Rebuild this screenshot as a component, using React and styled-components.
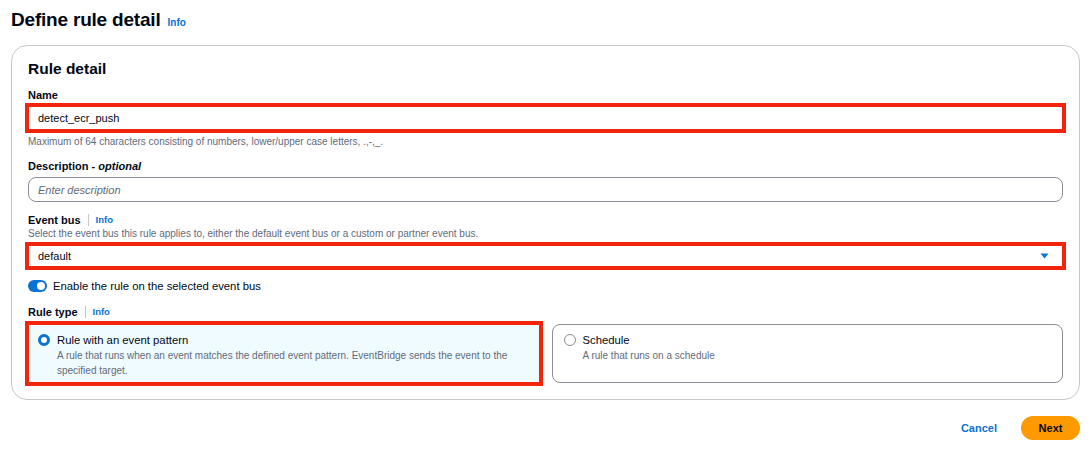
import React from 'react';
import styled, { createGlobalStyle } from 'styled-components';

const Global = createGlobalStyle`
  html, body { margin: 0; padding: 0; background: #ffffff; }
  body { font-family: "Liberation Sans", Arial, sans-serif; color: #000716; }
  * { box-sizing: border-box; }
`;

const Page = styled.div`
  padding: 8px 11px 0 11px;
`;

const TitleRow = styled.div`
  display: flex;
  align-items: baseline;
  gap: 7px;
  height: 24px;
  margin-bottom: 13px;
`;

const H1 = styled.h1`
  margin: 0;
  font-size: 19px;
  line-height: 24px;
  font-weight: 700;
  letter-spacing: -0.2px;
`;

const InfoLink = styled.a`
  color: #0972d3;
  font-weight: 700;
  font-size: ${p => p.$size || 9.5}px;
  text-decoration: none;
  cursor: pointer;
`;

const Panel = styled.section`
  border: 1px solid #c6c6cd;
  border-radius: 16px;
  padding: 13px 16px 16px;
`;

const H2 = styled.h2`
  margin: 0;
  font-size: 15.5px;
  line-height: 20px;
  font-weight: 700;
`;

const Label = styled.div`
  display: flex;
  align-items: center;
  font-size: 11px;
  line-height: 14px;
  font-weight: 700;
  margin-top: ${p => p.$mt || 0}px;
  margin-bottom: ${p => p.$mb || 0}px;
  em { font-style: italic; }
`;

const Sep = styled.span`
  display: inline-block;
  width: 1px;
  height: 12px;
  background: #c6c6cd;
  margin: 0 7px;
`;

const Help = styled.div`
  font-size: 10px;
  line-height: 13px;
  color: #5f6b7a;
  margin-top: ${p => p.$mt || 0}px;
`;

const Field = styled.div`
  display: flex;
  align-items: center;
  justify-content: space-between;
  height: ${p => p.$h}px;
  margin: ${p => (p.$highlight ? `${p.$mt || 0}px -3px 0` : `${p.$mt || 0}px 0 0`)};
  padding: 0 13px 0 9px;
  border: ${p => (p.$highlight ? '4px solid #f2250c' : '1px solid #8c8c94')};
  border-radius: ${p => (p.$highlight ? 0 : 8)}px;
  background: #ffffff;
  font-size: 11px;
  color: #000716;
`;

const Placeholder = styled.span`
  font-style: italic;
  color: #5f6b7a;
`;

const ToggleRow = styled.div`
  display: flex;
  align-items: center;
  gap: 6px;
  margin-top: 9px;
  height: 14px;
  font-size: 11.3px;
`;

const Toggle = styled.span`
  position: relative;
  display: inline-block;
  width: 19px;
  height: 12px;
  border-radius: 6px;
  background: #0972d3;
  &::after {
    content: '';
    position: absolute;
    top: 2px;
    right: 2px;
    width: 8px;
    height: 8px;
    border-radius: 50%;
    background: #ffffff;
  }
`;

const Cards = styled.div`
  display: grid;
  grid-template-columns: 1fr 1fr;
  grid-template-rows: 59px;
  gap: 12px;
  margin-top: 5px;
`;

const Card = styled.div`
  display: flex;
  align-items: flex-start;
  gap: 7px;
  margin: ${p => (p.$highlight ? '-3px' : '0')};
  padding: 8px 10px 0 ${p => (p.$highlight ? 9 : 11)}px;
  border: ${p => (p.$highlight ? '4px solid #f2250c' : '1px solid #8c8c94')};
  border-radius: ${p => (p.$highlight ? 0 : 8)}px;
  background: ${p => (p.$selected ? '#f0fbff' : '#ffffff')};
`;

const Radio = styled.span`
  flex: none;
  width: 12px;
  height: 12px;
  margin-top: 1px;
  border-radius: 50%;
  border: ${p => (p.$checked ? '3.5px solid #0972d3' : '1px solid #8c8c94')};
  background: #ffffff;
`;

const CardText = styled.div`
  display: flex;
  flex-direction: column;
`;

const CardTitle = styled.div`
  font-size: 11.3px;
  line-height: 14px;
  color: #000716;
`;

const CardDesc = styled.div`
  font-size: 10px;
  line-height: 15px;
  color: #5f6b7a;
  margin-top: 1px;
`;

const Footer = styled.div`
  display: flex;
  justify-content: flex-end;
  align-items: center;
  gap: 24px;
  margin-top: 16px;
`;

const LinkButton = styled.button`
  border: none;
  background: none;
  padding: 0;
  font-family: inherit;
  font-size: 11px;
  font-weight: 700;
  color: #0972d3;
  cursor: pointer;
`;

const PrimaryButton = styled.button`
  width: 59px;
  height: 24px;
  border: none;
  border-radius: 12px;
  background: #ff9900;
  font-family: inherit;
  font-size: 11px;
  font-weight: 700;
  color: #000716;
  cursor: pointer;
`;

const Caret = () => (
  <svg width="9" height="6" viewBox="0 0 9 6" aria-hidden="true">
    <path d="M0.5 0.5 H8.5 L4.5 5.5 Z" fill="#0972d3" />
  </svg>
);

export default function App() {
  return (
    <>
      <Global />
      <Page>
        <TitleRow>
          <H1>Define rule detail</H1>
          <InfoLink $size={10}>Info</InfoLink>
        </TitleRow>
        <Panel>
          <H2>Rule detail</H2>
          <Label $mt={9}>Name</Label>
          <Field $highlight $h={30} $mt={1}>detect_ecr_push</Field>
          <Help $mt={2}>Maximum of 64 characters consisting of numbers, lower/upper case letters, .,-,_.</Help>

          <Label $mt={11}>Description -&nbsp;<em>optional</em></Label>
          <Field $h={25} $mt={4}><Placeholder>Enter description</Placeholder></Field>

          <Label $mt={11}>Event bus<Sep /><InfoLink>Info</InfoLink></Label>
          <Help>Select the event bus this rule applies to, either the default event bus or a custom or partner event bus.</Help>
          <Field $highlight $h={28} $mt={2}>
            <span>default</span>
            <Caret />
          </Field>

          <ToggleRow>
            <Toggle />
            <span>Enable the rule on the selected event bus</span>
          </ToggleRow>

          <Label $mt={12}>Rule type<Sep /><InfoLink>Info</InfoLink></Label>
          <Cards>
            <Card $highlight $selected>
              <Radio $checked />
              <CardText>
                <CardTitle>Rule with an event pattern</CardTitle>
                <CardDesc>A rule that runs when an event matches the defined event pattern. EventBridge sends the event to the specified target.</CardDesc>
              </CardText>
            </Card>
            <Card>
              <Radio />
              <CardText>
                <CardTitle>Schedule</CardTitle>
                <CardDesc>A rule that runs on a schedule</CardDesc>
              </CardText>
            </Card>
          </Cards>
        </Panel>
        <Footer>
          <LinkButton>Cancel</LinkButton>
          <PrimaryButton>Next</PrimaryButton>
        </Footer>
      </Page>
    </>
  );
}
